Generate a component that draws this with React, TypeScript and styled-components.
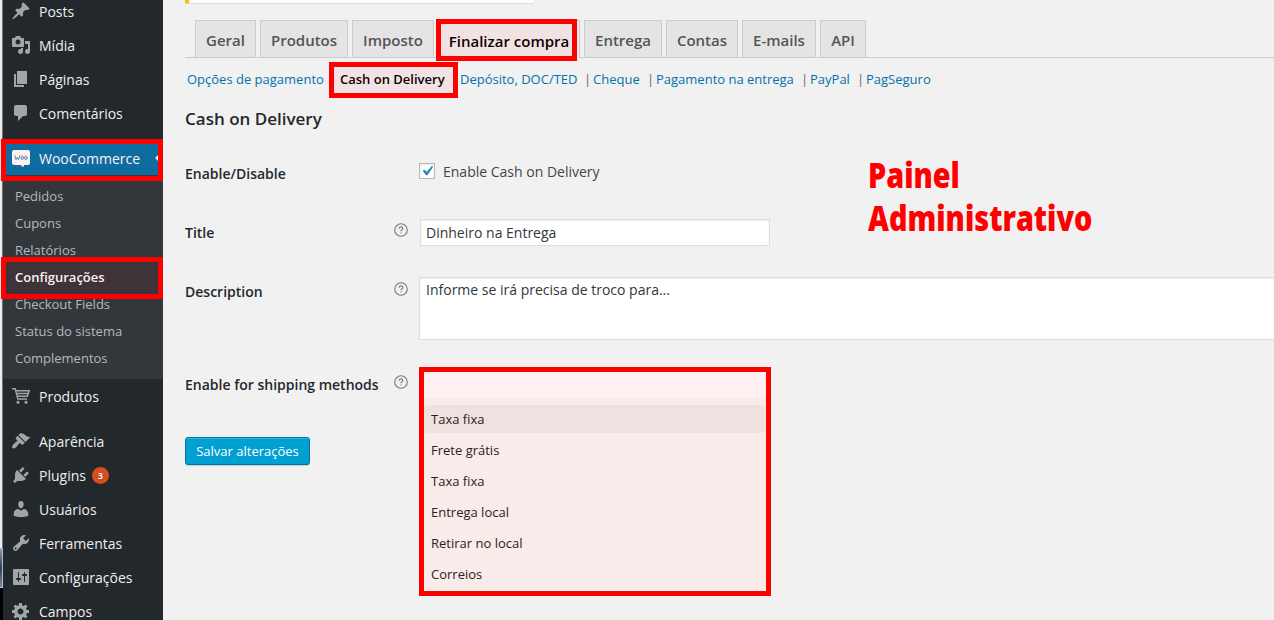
import React from 'react';
import styled, { createGlobalStyle, css } from 'styled-components';

const Global = createGlobalStyle`
  * { box-sizing: border-box; }
  html, body { margin: 0; padding: 0; background: #f1f1f1; overflow: hidden; }
  body { font-family: 'Open Sans', 'Noto Sans', sans-serif; font-size: 14px; color: #444; }
`;

const Screen = styled.div`
  position: relative;
  display: flex;
  width: 1274px;
  height: 620px;
  overflow: hidden;
  background: #f1f1f1;
`;

const Edge = styled.div`
  flex: none;
  display: flex;
  flex-direction: column;
  width: 3px;
  height: 620px;
`;

const EdgeLight = styled.div`
  height: 548px;
  background: #ececec;
  border-right: 1px solid #6f7174;
`;

const EdgeBlue = styled.div`
  height: 40px;
  background: linear-gradient(#8b99ac, #2d3f5c 50%, #7c8ba0);
  border: solid #b3bcc8;
  border-width: 1px 1px 1px 0;
`;

const EdgeBlack = styled.div`
  flex: 1;
  background: #000;
`;

const Sidebar = styled.nav`
  flex: none;
  width: 160px;
  height: 620px;
  overflow: hidden;
  background: #23282d;
`;

const MenuList = styled.div`
  display: flex;
  flex-direction: column;
  margin-top: -6px;
`;

const MenuItem = styled.a<{ $active?: boolean; $gap?: boolean }>`
  position: relative;
  flex: none;
  display: flex;
  align-items: center;
  height: 34px;
  padding-left: 8px;
  margin-top: ${(p) => (p.$gap ? '11px' : '0')};
  color: ${(p) => (p.$active ? '#fff' : '#eee')};
  background: ${(p) => (p.$active ? '#0073aa' : 'transparent')};
  white-space: nowrap;
`;

const MenuIcon = styled.svg`
  flex: none;
  width: 20px;
  height: 20px;
  margin-right: 8px;
  fill: #a0a5aa;
`;

const Arrow = styled.span`
  position: absolute;
  right: 0;
  top: 9px;
  border: 8px solid transparent;
  border-right-color: #f1f1f1;
  border-left: 0;
`;

const Badge = styled.span`
  display: flex;
  align-items: center;
  justify-content: center;
  width: 17px;
  height: 17px;
  margin-left: 6px;
  border-radius: 50%;
  background: #d54e21;
  color: #fff;
  font-size: 9px;
  font-weight: 600;
`;

const Submenu = styled.div`
  flex: none;
  height: 204px;
  padding: 7px 0 8px;
  background: #32373c;
`;

const SubItem = styled.a<{ $current?: boolean }>`
  display: flex;
  align-items: center;
  height: 27px;
  padding-left: 12px;
  font-size: 13px;
  color: #b4b9be;
  ${(p) => p.$current && css`
    color: #fff;
    font-weight: 600;
  `}
`;

const Main = styled.main`
  flex: 1;
  min-width: 0;
  padding-left: 22px;
`;

const Notice = styled.div`
  width: 349px;
  height: 3px;
  background: #fff;
  border-left: 4px solid #ffba00;
  box-shadow: 0 1px 1px rgba(0, 0, 0, 0.1);
`;

const Tabs = styled.div`
  display: flex;
  gap: 4px;
  height: 38px;
  margin-top: 17px;
  padding-left: 10px;
  border-bottom: 1px solid #ccc;
`;

const Tab = styled.a<{ $w: number; $active?: boolean }>`
  flex: none;
  display: flex;
  align-items: center;
  justify-content: center;
  width: ${(p) => p.$w}px;
  height: ${(p) => (p.$active ? 38 : 37)}px;
  padding-top: 2px;
  border: 1px solid #ccc;
  border-bottom: 0;
  background: ${(p) => (p.$active ? '#f1f1f1' : '#e4e4e4')};
  color: ${(p) => (p.$active ? '#000' : '#555')};
  font-size: 15px;
  font-weight: 600;
  white-space: nowrap;
`;

const Gateways = styled.div`
  display: flex;
  align-items: center;
  height: 42px;
  padding-left: 2px;
  font-size: 13px;
  white-space: nowrap;
`;

const Gateway = styled.a<{ $w: number; $current?: boolean }>`
  flex: none;
  width: ${(p) => p.$w}px;
  color: ${(p) => (p.$current ? '#000' : '#0073aa')};
  font-weight: ${(p) => (p.$current ? 600 : 400)};
`;

const Divider = styled.span`
  flex: none;
  width: 9px;
  color: #666;
`;

const Title = styled.h3`
  display: flex;
  align-items: center;
  height: 36px;
  margin: 0 0 9px;
  color: #23282d;
  font-size: 17px;
  font-weight: 600;
`;

const Row = styled.div<{ $h: number }>`
  display: grid;
  grid-template-columns: 209px 25px 1fr;
  height: ${(p) => p.$h}px;
`;

const Label = styled.label`
  padding-top: 19px;
  line-height: 20px;
  color: #23282d;
  font-weight: 600;
  white-space: nowrap;
`;

const Help = styled.svg`
  width: 14px;
  height: 14px;
  margin-top: 19px;
  overflow: visible;
`;

const Check = styled.div`
  display: flex;
  align-items: center;
  gap: 8px;
  height: 20px;
  margin-top: 16px;
`;

const Box = styled.span`
  display: flex;
  width: 16px;
  height: 16px;
  margin-top: 0;
  border: 1px solid #b4b9be;
  background: #fff;
  box-shadow: inset 0 1px 2px rgba(0, 0, 0, 0.1);
`;

const Tick = styled.svg`
  width: 20px;
  height: 20px;
  margin: -3px;
  flex: none;
  fill: #1e8cbe;
`;

const Field = styled.div`
  width: 350px;
  height: 27px;
  margin: 15px 0 0 1px;
  padding: 0 5px;
  border: 1px solid #ddd;
  background: #fff;
  box-shadow: inset 0 1px 2px rgba(0, 0, 0, 0.07);
  color: #32373c;
  line-height: 26px;
`;

const Area = styled.div`
  height: 63px;
  margin-top: 14px;
  padding: 2px 6px;
  border: 1px solid #ddd;
  border-right: 0;
  background: #fff;
  box-shadow: inset 0 1px 2px rgba(0, 0, 0, 0.07);
  color: #32373c;
  line-height: 20px;
`;

const Save = styled.button`
  display: flex;
  align-items: center;
  justify-content: center;
  width: 125px;
  height: 28px;
  padding: 0 0 1px;
  margin-top: 5px;
  border: 1px solid #0073aa;
  border-radius: 3px;
  background: #00a0d2;
  box-shadow: inset 0 1px 0 rgba(120, 200, 230, 0.5), 0 1px 0 rgba(0, 0, 0, 0.15);
  color: #fff;
  font-family: inherit;
  font-size: 13px;
  white-space: nowrap;
`;

const Dropdown = styled.div`
  position: absolute;
  left: 419px;
  top: 368px;
  width: 352px;
  height: 228px;
  padding: 5px 6px 5px 5px;
  background: #fbf9f9;
`;

const Search = styled.div`
  height: 25px;
  background: #fff;
`;

const Options = styled.div`
  display: flex;
  flex-direction: column;
  gap: 3px;
  padding-top: 7px;
  height: 193px;
  background: #faf9f9;
`;

const Option = styled.div<{ $hover?: boolean }>`
  flex: none;
  height: 28px;
  padding-left: 7px;
  border-radius: 3px;
  background: ${(p) => (p.$hover ? '#f0efef' : 'transparent')};
  color: #222;
  font-size: 13px;
  line-height: 28px;
`;

/* Red highlight drawn over the panel it points at. */
const Frame = styled.div<{ $x: number; $y: number; $w: number; $h: number }>`
  position: absolute;
  left: ${(p) => p.$x}px;
  top: ${(p) => p.$y}px;
  width: ${(p) => p.$w}px;
  height: ${(p) => p.$h}px;
  border: 5px solid #f00;
  background: rgba(255, 0, 0, 0.055);
  background-clip: padding-box;
`;

const Caption = styled.div`
  position: absolute;
  left: 868px;
  top: 153px;
  color: #f00;
  font-size: 36px;
  font-weight: 800;
  line-height: 43px;
  transform: scaleX(0.8);
  transform-origin: 0 0;
`;

const icons: Record<string, string> = {
  post: 'M10.44 3.02l1.82-1.82 6.36 6.35-1.83 1.82c-1.05-.68-2.48-.57-3.41.36l-.75.75c-.92.93-1.04 2.35-.35 3.41l-1.83 1.82-2.41-2.41-2.8 2.79c-.42.42-3.38 2.71-3.8 2.29s1.86-3.39 2.28-3.81l2.79-2.79L4.1 9.36l1.83-1.82c1.05.69 2.48.57 3.4-.36l.75-.75c.93-.92 1.05-2.35.36-3.41z',
  media: 'M13 11V4c0-.55-.45-1-1-1h-1.67L9 1H5L3.67 3H2c-.55 0-1 .45-1 1v7c0 .55.45 1 1 1h10c.55 0 1-.45 1-1zM7 4.5c1.38 0 2.5 1.12 2.5 2.5S8.38 9.5 7 9.5 4.5 8.38 4.5 7 5.62 4.5 7 4.5zM14 6h5v10.5c0 1.38-1.12 2.5-2.5 2.5S14 17.88 14 16.5s1.12-2.5 2.5-2.5c.17 0 .34.02.5.05V9h-3V6zm-4 8.05V13h2v3.5c0 1.38-1.12 2.5-2.5 2.5S7 17.88 7 16.5 8.12 14 9.5 14c.17 0 .34.02.5.05z',
  page: 'M6 15V2h10v13H6zm-1 1h8v2H3V5h2v11z',
  comments: 'M5 2h9c1.1 0 2 .9 2 2v7c0 1.1-.9 2-2 2h-2l-5 5v-5H5c-1.1 0-2-.9-2-2V4c0-1.1.9-2 2-2z',
  appearance: 'M14.48 11.06L7.41 3.99l1.5-1.5c.5-.56 2.3-.47 3.51.32 1.21.8 1.43 1.28 2.91 2.1 1.18.64 2.45 1.26 4.45.85zm-.71.71L6.7 4.7 4.93 6.47c-.39.39-.39 1.02 0 1.41l1.06 1.06c.39.39.39 1.03 0 1.42-.6.6-1.43 1.11-2.21 1.69-.35.26-.7.53-1.01.84C1.43 14.23.4 16.08 1.4 17.07c.99 1 2.84-.03 4.18-1.36.31-.31.58-.66.85-1.02.57-.78 1.08-1.61 1.69-2.21.39-.39 1.02-.39 1.41 0l1.06 1.06c.39.39 1.02.39 1.41 0z',
  plugins: 'M13.11 4.36L9.87 7.6 8 5.73l3.24-3.24c.35-.34 1.05-.2 1.56.32.52.51.66 1.21.31 1.55zm-8 1.77l.91-1.12 9.01 9.01-1.19.84c-.71.71-2.63 1.16-3.82 1.16H6.14L4.9 17.26c-.59.59-1.54.59-2.12 0-.59-.58-.59-1.53 0-2.12l1.24-1.24v-3.88c0-1.13.4-3.19 1.09-3.89zm7.26 3.97l3.24-3.24c.34-.35 1.04-.21 1.55.31.52.51.66 1.21.31 1.55l-3.24 3.25z',
  users: 'M10 9.25c-2.27 0-2.73-3.44-2.73-3.44C7 4.02 7.82 2 9.97 2c2.16 0 2.98 2.02 2.71 3.81 0 0-.41 3.44-2.68 3.44zm0 2.57L12.72 10c2.39 0 4.52 2.33 4.52 4.53v2.49s-3.65 1.13-7.24 1.13c-3.65 0-7.24-1.13-7.24-1.13v-2.49c0-2.25 1.94-4.48 4.47-4.48z',
  tools: 'M16.68 9.77c-1.34 1.34-3.3 1.67-4.95.99l-5.41 6.52c-.99.99-2.59.99-3.58 0s-.99-2.59 0-3.57l6.52-5.42c-.68-1.65-.35-3.61.99-4.95 1.28-1.28 3.12-1.62 4.72-1.06l-2.89 2.89 2.82 2.82 2.86-2.87c.53 1.58.18 3.39-1.08 4.65zM3.81 16.21c.4.39 1.04.39 1.43 0 .4-.4.4-1.04 0-1.43-.39-.4-1.03-.4-1.43 0-.39.39-.39 1.03 0 1.43z',
  settings: 'M18 17V3c0-.55-.45-1-1-1H3c-.55 0-1 .45-1 1v14c0 .55.45 1 1 1h14c.55 0 1-.45 1-1zM8 11h1c.55 0 1 .45 1 1s-.45 1-1 1H8v1.5c0 .28-.22.5-.5.5s-.5-.22-.5-.5V13H6c-.55 0-1-.45-1-1s.45-1 1-1h1V5.5c0-.28.22-.5.5-.5s.5.22.5.5V11zm5-2h-1c-.55 0-1-.45-1-1s.45-1 1-1h1V5.5c0-.28.22-.5.5-.5s.5.22.5.5V7h1c.55 0 1 .45 1 1s-.45 1-1 1h-1v5.5c0 .28-.22.5-.5.5s-.5-.22-.5-.5V9z',
  generic: 'M18 12h-2.18c-.17.7-.44 1.35-.81 1.93l1.54 1.54-2.1 2.1-1.54-1.54c-.58.36-1.23.63-1.91.79V19H8v-2.18c-.68-.16-1.33-.43-1.91-.79l-1.54 1.54-2.12-2.12 1.54-1.54c-.36-.58-.63-1.23-.79-1.91H1V9.03h2.17c.16-.7.44-1.35.8-1.94L2.43 5.55l2.1-2.1 1.54 1.54c.58-.37 1.24-.64 1.93-.81V2h3v2.18c.68.16 1.33.43 1.91.79l1.54-1.54 2.12 2.12-1.54 1.54c.36.59.64 1.24.8 1.94H18V12zm-8.5 1.5c1.66 0 3-1.34 3-3s-1.34-3-3-3-3 1.34-3 3 1.34 3 3 3z',
};

const Icon = ({ name }: { name: string }) => (
  <MenuIcon viewBox="0 0 20 20">
    <path fillRule="evenodd" d={icons[name]} />
  </MenuIcon>
);

const WooIcon = () => (
  <MenuIcon viewBox="0 0 20 20">
    <path
      fill="#fff"
      d="M3 2h14a2 2 0 0 1 2 2v11a2 2 0 0 1-2 2h-4l-.6 2.2L9.5 17H3a2 2 0 0 1-2-2V4a2 2 0 0 1 2-2z"
    />
    <g fill="none" stroke="#4a93bd" strokeWidth="1" strokeLinecap="round" strokeLinejoin="round">
      <path d="M4 7.8l1 4 1.4-2.6 1.1 2.6 1.2-4" />
      <ellipse cx="11.2" cy="9.8" rx="1.2" ry="1.8" />
      <ellipse cx="14.8" cy="9.8" rx="1.2" ry="1.8" />
    </g>
  </MenuIcon>
);

const CartIcon = () => (
  <MenuIcon viewBox="0 0 20 20">
    <g fill="none" stroke="#a0a5aa" strokeWidth="1.4">
      <path d="M1 2.7h3.2L6.8 13H16" />
      <path d="M4.8 4.7h13.4l-1.8 5.6H6.2M5.5 7.5h12" />
    </g>
    <circle cx="7" cy="16.2" r="1.5" />
    <circle cx="15" cy="16.2" r="1.5" />
  </MenuIcon>
);

const HelpIcon = () => (
  <Help viewBox="0 0 14 14" fill="none" stroke="#777">
    <circle cx="7" cy="7" r="6.3" strokeWidth="1.1" />
    <path d="M5.2 5.7c0-1.1.8-1.8 1.8-1.8s1.8.7 1.8 1.6c0 1.3-1.8 1.3-1.8 2.8M7 9.4v1.1" strokeWidth="1.1" />
  </Help>
);

const submenu = ['Pedidos', 'Cupons', 'Relatórios', 'Configurações', 'Checkout Fields', 'Status do sistema', 'Complementos'];

const tabs: [string, number][] = [
  ['Geral', 61], ['Produtos', 88], ['Imposto', 82], ['Finalizar compra', 142],
  ['Entrega', 78], ['Contas', 72], ['E-mails', 74], ['API', 46],
];

const gateways: [string, number][] = [
  ['Opções de pagamento', 153], ['Cash on Delivery', 120], ['Depósito, DOC/TED', 124],
  ['Cheque', 54], ['Pagamento na entrega', 145], ['PayPal', 47], ['PagSeguro', 70],
];

const options = ['Taxa fixa', 'Frete grátis', 'Taxa fixa', 'Entrega local', 'Retirar no local', 'Correios'];

export default function App() {
  return (
    <>
      <Global />
      <Screen>
        <Edge>
          <EdgeLight />
          <EdgeBlue />
          <EdgeBlack />
        </Edge>
        <Sidebar>
          <MenuList>
            <MenuItem><Icon name="post" />Posts</MenuItem>
            <MenuItem><Icon name="media" />Mídia</MenuItem>
            <MenuItem><Icon name="page" />Páginas</MenuItem>
            <MenuItem><Icon name="comments" />Comentários</MenuItem>
            <MenuItem $active $gap><WooIcon />WooCommerce<Arrow /></MenuItem>
            <Submenu>
              {submenu.map((s) => <SubItem key={s} $current={s === 'Configurações'}>{s}</SubItem>)}
            </Submenu>
            <MenuItem><CartIcon />Produtos</MenuItem>
            <MenuItem $gap><Icon name="appearance" />Aparência</MenuItem>
            <MenuItem><Icon name="plugins" />Plugins<Badge>3</Badge></MenuItem>
            <MenuItem><Icon name="users" />Usuários</MenuItem>
            <MenuItem><Icon name="tools" />Ferramentas</MenuItem>
            <MenuItem><Icon name="settings" />Configurações</MenuItem>
            <MenuItem><Icon name="generic" />Campos</MenuItem>
          </MenuList>
        </Sidebar>
        <Main>
          <Notice />
          <Tabs>
            {tabs.map(([name, w]) => (
              <Tab key={name} $w={w} $active={name === 'Finalizar compra'}>{name}</Tab>
            ))}
          </Tabs>
          <Gateways>
            {gateways.map(([name, w], i) => (
              <React.Fragment key={name}>
                {i > 2 && <Divider>|</Divider>}
                <Gateway $w={w} $current={i === 1}>{name}</Gateway>
              </React.Fragment>
            ))}
          </Gateways>
          <Title>Cash on Delivery</Title>
          <Row $h={59}>
            <Label>Enable/Disable</Label>
            <span />
            <Check>
              <Box><Tick viewBox="0 0 20 20"><path d="M14.83 4.89l1.34.94-5.81 8.38H9.02L5.78 9.67l1.34-1.25 2.57 2.4z" /></Tick></Box>
              Enable Cash on Delivery
            </Check>
          </Row>
          <Row $h={59}>
            <Label>Title</Label>
            <HelpIcon />
            <Field>Dinheiro na Entrega</Field>
          </Row>
          <Row $h={93}>
            <Label>Description</Label>
            <HelpIcon />
            <Area>Informe se irá precisa de troco para...</Area>
          </Row>
          <Row $h={76}>
            <Label>Enable for shipping methods</Label>
            <HelpIcon />
          </Row>
          <Save>Salvar alterações</Save>
        </Main>
        <Dropdown>
          <Search />
          <Options>
            {options.map((o, i) => <Option key={i} $hover={i === 0}>{o}</Option>)}
          </Options>
        </Dropdown>
        <Frame $x={1} $y={139} $w={162} $h={42} />
        <Frame $x={1} $y={257} $w={162} $h={42} />
        <Frame $x={436} $y={19} $w={141} $h={42} />
        <Frame $x={329} $y={62} $w={129} $h={36} />
        <Frame $x={419} $y={367} $w={352} $h={229} />
        <Caption>Painel<br />Administrativo</Caption>
      </Screen>
    </>
  );
}
